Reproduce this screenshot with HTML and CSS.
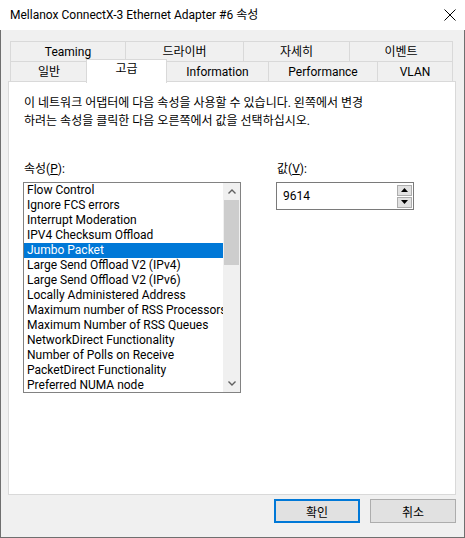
FILE: index.html
```html
<!DOCTYPE html>
<html lang="ko">
<head>
<meta charset="utf-8">
<title>속성</title>
<link rel="stylesheet" href="styles.css">
</head>
<body>
<div class="window">
  <div class="titlebar">
    <span class="title">Mellanox ConnectX-3 Ethernet Adapter #6 속성</span>
    <svg class="close" width="12" height="12" viewBox="0 0 12 12"><path d="M0.5 0.5 L11.5 11.5 M11.5 0.5 L0.5 11.5" stroke="#000" stroke-width="1" fill="none"/></svg>
  </div>
  <div class="client">
    <div class="tabs">
      <div class="tabrow">
        <div class="tab w-teaming">Teaming</div>
        <div class="tab w-driver">드라이버</div>
        <div class="tab w-detail">자세히</div>
        <div class="tab w-event">이벤트</div>
      </div>
      <div class="tabrow row2">
        <div class="tab w-general">일반</div>
        <div class="tab w-adv selected">고급</div>
        <div class="tab w-info">Information</div>
        <div class="tab w-perf">Performance</div>
        <div class="tab w-vlan">VLAN</div>
      </div>
    </div>
    <div class="panel">
      <p class="desc">이 네트워크 어댑터에 다음 속성을 사용할 수 있습니다. 왼쪽에서 변경<br>하려는 속성을 클릭한 다음 오른쪽에서 값을 선택하십시오.</p>
      <div class="props">
        <div class="col-left">
          <div class="label">속성(<u>P</u>):</div>
          <div class="listbox">
            <ul class="items">
              <li>Flow Control</li>
              <li>Ignore FCS errors</li>
              <li>Interrupt Moderation</li>
              <li>IPV4 Checksum Offload</li>
              <li class="sel">Jumbo Packet</li>
              <li>Large Send Offload V2 (IPv4)</li>
              <li>Large Send Offload V2 (IPv6)</li>
              <li>Locally Administered Address</li>
              <li>Maximum number of RSS Processors</li>
              <li>Maximum Number of RSS Queues</li>
              <li>NetworkDirect Functionality</li>
              <li>Number of Polls on Receive</li>
              <li>PacketDirect Functionality</li>
              <li>Preferred NUMA node</li>
            </ul>
            <div class="vscroll">
              <div class="arrow">
                <svg width="8" height="5" viewBox="0 0 8 5"><path d="M0.5 4.5 L4 1 L7.5 4.5" stroke="#606060" stroke-width="1.4" fill="none"/></svg>
              </div>
              <div class="track"><div class="thumb"></div></div>
              <div class="arrow">
                <svg width="8" height="5" viewBox="0 0 8 5"><path d="M0.5 0.5 L4 4 L7.5 0.5" stroke="#606060" stroke-width="1.4" fill="none"/></svg>
              </div>
            </div>
          </div>
        </div>
        <div class="col-right">
          <div class="label">값(<u>V</u>):</div>
          <div class="editbox">
            <span class="value">9614</span>
            <div class="spin">
              <div class="spinbtn"><svg width="7" height="4" viewBox="0 0 7 4"><path d="M3.5 0 L7 4 L0 4 Z" fill="#000"/></svg></div>
              <div class="spinbtn"><svg width="7" height="4" viewBox="0 0 7 4"><path d="M0 0 L7 0 L3.5 4 Z" fill="#000"/></svg></div>
            </div>
          </div>
        </div>
      </div>
    </div>
    <div class="buttons">
      <button class="btn default">확인</button>
      <button class="btn">취소</button>
    </div>
  </div>
</div>
</body>
</html>
```

FILE: styles.css
```css
* { box-sizing: border-box; }
html, body { margin: 0; padding: 0; }
body {
  width: 465px;
  height: 538px;
  overflow: hidden;
  background: #f0f0f0;
  font-family: Roboto, "Noto Sans CJK KR", sans-serif;
  font-size: 12px;
  color: #000;
}
.window {
  width: 465px;
  height: 538px;
  display: flex;
  flex-direction: column;
}
.titlebar {
  height: 30px;
  background: #fff;
  display: flex;
  align-items: center;
  justify-content: space-between;
  padding: 0 8px 0 10px;
}
.title {
  font-size: 12px;
  line-height: 16px;
  color: #000;
}
.close { display: block; margin-right: 1px; }
.client {
  flex: 1;
  background: #f0f0f0;
  border-left: 1px solid #6f6f6f;
  border-right: 1px solid #6f6f6f;
  border-bottom: 1px solid #6f6f6f;
  padding-top: 11px;
}
.tabs {
  margin-left: 9px;
  position: relative;
  z-index: 2;
}
.tabrow {
  display: flex;
}
.row2 { margin-top: -1px; }
.tab {
  height: 21px;
  border: 1px solid #d9d9d9;
  background: #f0f0f0;
  margin-left: -1px;
  display: flex;
  align-items: center;
  justify-content: center;
  line-height: 15px;
  padding-top: 1px;
  white-space: nowrap;
}
.tab:first-child { margin-left: 0; }
.w-teaming { width: 116px; }
.w-driver { width: 119px; }
.w-detail { width: 107px; }
.w-event { width: 104px; }
.w-general { width: 78px; }
.w-adv { width: 80px; }
.w-info { width: 103px; }
.w-perf { width: 110px; }
.w-vlan { width: 76px; }
.tab.selected {
  position: relative;
  background: #fff;
  border-bottom: none;
  height: 24px;
  margin-top: -2px;
  margin-bottom: -1px;
  margin-left: -2px;
  width: 81px;
  align-items: flex-start;
  padding-top: 2px;
  z-index: 3;
}
.panel {
  margin-left: 7px;
  margin-top: -1px;
  width: 448px;
  height: 414px;
  background: #fff;
  border: 1px solid #d9d9d9;
  padding: 12px 0 0 14px;
  position: relative;
  z-index: 1;
}
.desc {
  margin: 0 0 0 1px;
  line-height: 18px;
}
.props {
  display: flex;
  gap: 35px;
  margin-top: 32px;
}
.label {
  line-height: 15px;
  margin: 0 0 5px 1px;
}
.col-left { width: 218px; }
.listbox {
  width: 218px;
  height: 211px;
  border: 1px solid #828282;
  display: flex;
  overflow: hidden;
  background: #fff;
}
.items {
  list-style: none;
  margin: 0;
  padding: 0;
  width: 199px;
  overflow: hidden;
}
.items li {
  height: 15px;
  line-height: 15px;
  padding-left: 3px;
  white-space: nowrap;
  overflow: hidden;
}
.items li.sel {
  background: #0078d7;
  color: #fff;
}
.vscroll {
  width: 17px;
  background: #f0f0f0;
  display: flex;
  flex-direction: column;
}
.arrow {
  height: 17px;
  display: flex;
  align-items: center;
  justify-content: center;
}
.arrow svg { display: block; }
.track {
  flex: 1;
  padding: 0 1px;
}
.thumb {
  height: 65px;
  background: #cdcdcd;
}
.col-right { width: 138px; }
.editbox {
  width: 138px;
  height: 28px;
  border: 1px solid #7a7a7a;
  display: flex;
  align-items: center;
  justify-content: space-between;
  padding: 0 1px 0 6px;
}
.value { line-height: 15px; }
.spin {
  display: flex;
  flex-direction: column;
  gap: 1px;
}
.spinbtn {
  width: 15px;
  height: 11px;
  background: #e1e1e1;
  border: 1px solid #adadad;
  display: flex;
  align-items: center;
  justify-content: center;
}
.spinbtn svg { display: block; }
.buttons {
  display: flex;
  justify-content: flex-end;
  gap: 10px;
  padding-right: 8px;
  margin-top: 4px;
}
.btn {
  width: 86px;
  height: 24px;
  background: #e1e1e1;
  border: 1px solid #adadad;
  font-family: "Noto Sans CJK KR", sans-serif;
  font-size: 12px;
  color: #000;
  padding: 0;
  line-height: 15px;
}
.btn.default {
  border: 2px solid #0078d7;
}
```
